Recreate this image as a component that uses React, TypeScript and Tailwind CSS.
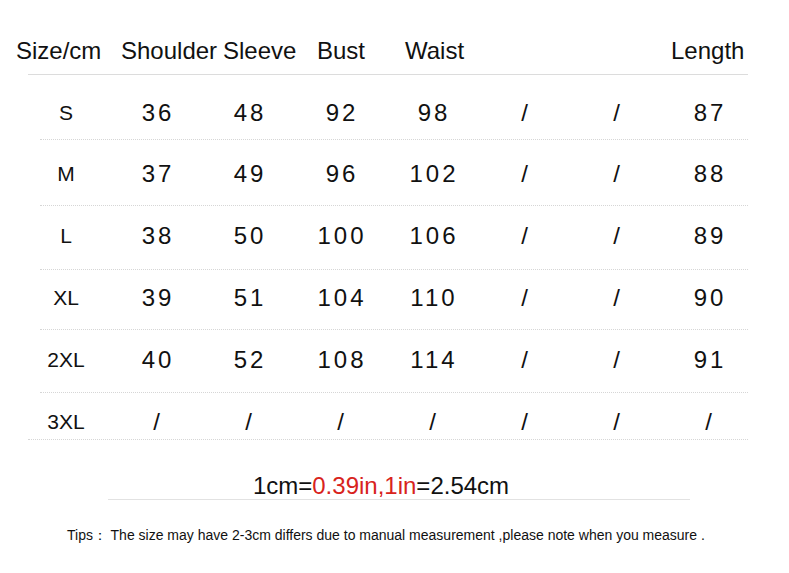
import React from "react";

const rows: { label: string; vals: string[]; h: string; pt: string }[] = [
  { label: "S", vals: ["36", "48", "92", "98", "/", "/", "87"], h: "h-[65px]", pt: "pt-[26px]" },
  { label: "M", vals: ["37", "49", "96", "102", "/", "/", "88"], h: "h-[66px]", pt: "pt-[22px]" },
  { label: "L", vals: ["38", "50", "100", "106", "/", "/", "89"], h: "h-[64px]", pt: "pt-[18px]" },
  { label: "XL", vals: ["39", "51", "104", "110", "/", "/", "90"], h: "h-[60px]", pt: "pt-[16px]" },
  { label: "2XL", vals: ["40", "52", "108", "114", "/", "/", "91"], h: "h-[63px]", pt: "pt-[18px]" },
  { label: "3XL", vals: ["/", "/", "/", "/", "/", "/", "/"], h: "h-[47px]", pt: "pt-[17px]" },
];

export default function App() {
  return (
    <div
      className="w-[789px] h-[573px] bg-white text-[#111] overflow-hidden"
      style={{ fontFamily: '"Liberation Sans", Arial, sans-serif' }}
    >
      {/* header */}
      <div className="flex pt-[39px] text-[24px] leading-[24px]">
        <div className="w-[105px] pl-[16px] shrink-0 box-content">Size/cm</div>
        <div className="w-[102px] shrink-0">Shoulder</div>
        <div className="w-[94px] shrink-0">Sleeve</div>
        <div className="w-[88px] shrink-0">Bust</div>
        <div className="w-[266px] shrink-0">Waist</div>
        <div className="shrink-0">Length</div>
      </div>
      <div className="ml-[28px] w-[720px] mt-[11px] border-b border-[#dcdcdc]" />

      {/* rows */}
      {rows.map((r, i) => (
        <div
          key={r.label}
          className={`${r.h} ${r.pt} ${i === rows.length - 1 ? "ml-[28px] w-[720px]" : "ml-[40px] w-[708px]"} border-b border-dotted border-[#d6d6d6]`}
        >
          <div
            className={`grid grid-cols-[repeat(8,92px)] ${i === rows.length - 1 ? "-ml-[8px]" : "-ml-[20px]"}`}
          >
            <div className="text-center text-[21px] leading-[24px]">{r.label}</div>
            {r.vals.map((v, j) => (
              <div key={j} className="text-center text-[24px] leading-[24px] tracking-[3px]">
                {v}
              </div>
            ))}
          </div>
        </div>
      ))}

      {/* conversion */}
      <div className="mt-[34px] ml-[108px] w-[582px] border-b border-[#e2e2e2] text-center text-[24px] leading-[24px] pb-[1px]">
        <span className="pr-[36px]">
          1cm=<span className="text-[#d8231c]">0.39in,1in</span>=2.54cm
        </span>
      </div>

      {/* tips */}
      <div className="mt-[27px] pl-[67px] text-[14px] leading-[16px]">
        Tips： The size may have 2-3cm differs due to manual measurement ,please note when you measure .
      </div>
    </div>
  );
}
